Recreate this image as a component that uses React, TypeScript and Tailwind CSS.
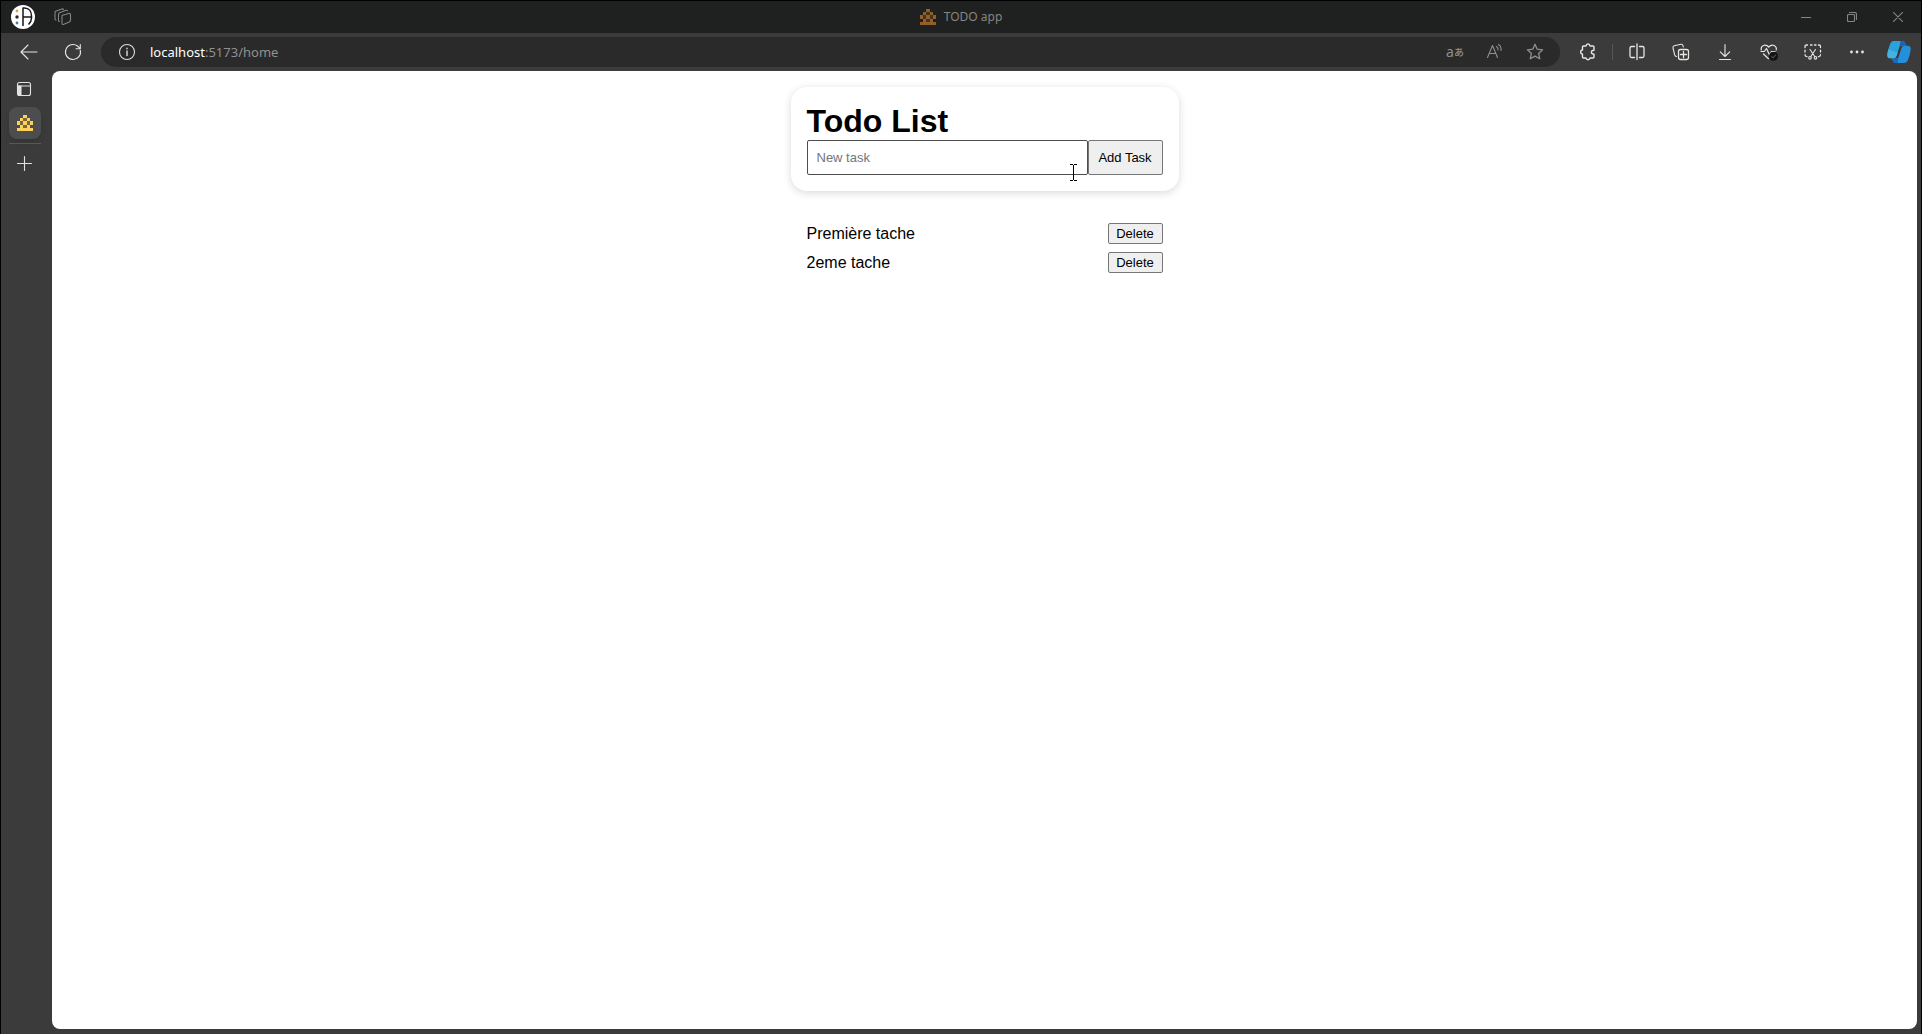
import type { ReactNode } from 'react';

function House({ main, dim }: { main: string; dim: string }) {
  return (
    <svg width="16" height="16" viewBox="0 0 5 5" shapeRendering="crispEdges" aria-hidden="true">
      <path fill={dim} d="M2 1h1v1h-1zM1 2h1v1h-1zM3 2h1v1h-1zM2 3h1v1h-1z" />
      <path
        fill={main}
        d="M2 0h1v1h-1zM1 1h1v1h-1zM3 1h1v1h-1zM0 2h1v1h-1zM2 2h1v1h-1zM4 2h1v1h-1zM1 3h1v1h-1zM3 3h1v1h-1zM0 4h5v1h-5z"
      />
    </svg>
  );
}

function Glyph({ size = 20, children }: { size?: number; children: ReactNode }) {
  return (
    <svg
      width={size}
      height={size}
      viewBox={`0 0 ${size} ${size}`}
      fill="none"
      stroke="currentColor"
      strokeWidth="1.1"
      strokeLinecap="round"
      strokeLinejoin="round"
      aria-hidden="true"
    >
      {children}
    </svg>
  );
}

function IconButton({ label, className, children }: { label: string; className: string; children: ReactNode }) {
  return (
    <button type="button" aria-label={label} className={`flex shrink-0 items-center justify-center ${className}`}>
      {children}
    </button>
  );
}

function TitleBar() {
  return (
    <header className="grid h-8 shrink-0 grid-cols-[1fr_auto_1fr] items-center bg-[#1f2120] text-[#858583]">
      <div className="flex items-center pl-[10px]">
        <IconButton label="Profile" className="size-6">
          <svg width="24" height="24" viewBox="0 0 24 24" aria-hidden="true">
            <circle cx="12" cy="12" r="12" fill="#fff" />
            <circle cx="6" cy="6" r="1.4" fill="#dda24b" />
            <circle cx="6" cy="12" r="1.7" fill="#222c30" />
            <circle cx="6" cy="18" r="1.4" fill="#3f7eae" />
            <path
              d="M12 21V2.6M12 3h1.500c4.500 0 7 3.500 7 8v2c0 3-1.500 5-3 6.500M12 12h8.500"
              fill="none"
              stroke="#161616"
              strokeWidth="1.5"
            />
          </svg>
        </IconButton>
        <IconButton label="Workspaces" className="ml-4 size-6">
          <Glyph size={18}>
            <path d="M8.500 7.300 14.800 5.500Q16.500 5 16.500 6.800V12q0 1.300-1.200 1.900L9.800 16.300Q8 17 8 15.200V8.200q0-.7.500-.9z" />
            <path d="M5.500 13.500Q4.500 13.500 4.500 12.200V6.500q0-1.200 1.200-1.700L12 2.300q1-.3 1.500.5M2 12Q1 12 1 10.700V4.800q0-1.200 1.200-1.700L8 1q1-.3 1.500.5" />
          </Glyph>
        </IconButton>
      </div>
      <div className="flex items-center gap-2">
        <House main="#935f28" dim="#443321" />
        <span className="text-[12px] leading-4">TODO app</span>
      </div>
      <div className="flex justify-end">
        <IconButton label="Minimize" className="h-8 w-[46px]">
          <Glyph size={10}><path d="M0 5.500h10" /></Glyph>
        </IconButton>
        <IconButton label="Restore" className="h-8 w-[46px]">
          <Glyph size={10}>
            <rect x=".5" y="2.500" width="7" height="7" rx="1" />
            <path d="M2.500.5h5q2 0 2 2v5" />
          </Glyph>
        </IconButton>
        <IconButton label="Close" className="h-8 w-[46px]">
          <Glyph size={10}><path d="m.4.4 9.200 9.200M9.600.4.4 9.600" /></Glyph>
        </IconButton>
      </div>
    </header>
  );
}

function AddressBar() {
  return (
    <div className="flex h-[30px] min-w-0 flex-1 items-center rounded-full bg-[#2a2a2a] pl-4 pr-[15px]">
      <IconButton label="Site information" className="size-5 text-[#dedede]">
        <Glyph>
          <circle cx="10" cy="10" r="7.500" />
          <path d="M10 9v4.500M10 6.300v.4" strokeWidth="1.4" />
        </Glyph>
      </IconButton>
      <a href="#home" className="ml-[13px] min-w-0 flex-1 truncate text-[13px] leading-5 text-[#8f9092]">
        <span className="text-white">localhost</span>:5173/home
      </a>
      <div className="flex items-center gap-5 text-[#8d8f90]">
        <IconButton label="Translate" className="size-5">
          <span className="flex items-center whitespace-nowrap leading-5">
            <span className="text-[14px]">a</span>
            <span className="text-[10px] font-medium">あ</span>
          </span>
        </IconButton>
        <IconButton label="Read aloud" className="size-5">
          <Glyph>
            <path d="M2.500 15.500 7.500 3.500l5 12M4.200 11.500h6.600" />
            <path d="M11.500 4.500q1.800 1.200 1.500 3.500M13.500 2.500q3 2 2.500 6" />
          </Glyph>
        </IconButton>
        <IconButton label="Add to favorites" className="size-5">
          <Glyph>
            <path
              d="m10 2.300 2.200 4.900 5.400.6-4 3.600 1.200 5.400L10 14.100l-4.800 2.700 1.200-5.400-4-3.600 5.400-.6z"
              strokeWidth="1.3"
            />
          </Glyph>
        </IconButton>
      </div>
    </div>
  );
}

function Toolbar() {
  return (
    <nav className="flex h-[38px] shrink-0 items-center pl-[18px] pr-[10px] text-[#e8e6e3]">
      <IconButton label="Back" className="size-5">
        <Glyph><path d="M18 10H2.300M9 3 2 10l7 7" /></Glyph>
      </IconButton>
      <IconButton label="Refresh" className="ml-6 mr-[18px] size-5">
        <Glyph>
          <path d="M17.300 8.300A7.500 7.500 0 1 1 14.500 4l2.200 2.200M17.300 2.500v4.300H13" />
        </Glyph>
      </IconButton>
      <AddressBar />
      <IconButton label="Extensions" className="ml-[18px] size-5">
        <Glyph>
          <path
            d="M5.500 4H8q.2-2 2-2t2 2h3q1 0 1 1v3.300q-2.600 0-2.600 1.900t2.600 1.900V15q0 1-1 1h-3q-.2 1.700-2 1.700T8 16H5.500q-1 0-1-1v-2.900Q2.700 12 2.700 10t1.800-2V5q0-1 1-1z"
            strokeWidth="1.4"
          />
        </Glyph>
      </IconButton>
      <span className="ml-[14px] h-4 w-px bg-[#5b554f]" />
      <div className="ml-[14px] flex items-center gap-6">
        <IconButton label="Split screen" className="size-5">
          <Glyph>
            <path
              d="M10 2v15.500M7.500 4.500h-3q-1.500 0-1.500 1.500v8q0 1.500 1.500 1.500h3M12.500 4.500h3q1.500 0 1.500 1.500v8q0 1.500-1.500 1.500h-3"
              strokeWidth="1.3"
            />
          </Glyph>
        </IconButton>
        <IconButton label="Collections" className="size-5">
          <Glyph>
            <path d="M5.500 14.500q-1.500 0-1.900-1.800L2 6q-.3-1.700 1.200-2.200L10 2.300q1.600-.3 2 1.300L12.300 5" />
            <rect x="7.500" y="7.500" width="10" height="10" rx="2" strokeWidth="1.3" />
            <path d="M12.500 9.500v6M9.500 12.500h6" strokeWidth="1.3" />
          </Glyph>
        </IconButton>
        <IconButton label="Downloads" className="size-5">
          <Glyph><path d="M10 2.500v12M5.300 9.800 10 14.500l4.700-4.700M4.500 17.500h11" /></Glyph>
        </IconButton>
        <IconButton label="Browser essentials" className="size-5">
          <Glyph>
            <path
              d="M2.300 8Q1.500 4.800 4.500 3.500 7.500 2.500 9.700 5 12 2.500 15 3.500q3 1.500 2.200 4.500M4.500 12l5 4.700M2 9.500h3.300L7.500 6.500l3 6.500 2-3.500H16"
              strokeWidth="1.2"
            />
            <circle cx="14.500" cy="14.200" r="4.500" fill="#111313" stroke="none" />
            <path d="m12.500 14.300 1.500 1.500 2.700-2.800" stroke="#4a4d4d" />
          </Glyph>
        </IconButton>
        <IconButton label="Screenshot" className="size-5">
          <Glyph>
            <path
              d="M2 5.500V4.500Q2 3 3.500 3h1M7.500 3h1.500M11.500 3h1.500M15.500 3H16q1.500 0 1.500 1.500v1M17.500 8.200v1.800M17.500 12.700q0 1.800-2 2M2 8.200v1.800M2 12.700q0 1.800 2 2"
              strokeWidth="1.3"
            />
            <path d="m7 7.500 4.700 7M12.500 7.500l-4.700 7" strokeWidth="1.1" />
            <circle cx="7" cy="15.800" r="1.300" />
            <circle cx="12.500" cy="15.800" r="1.300" />
          </Glyph>
        </IconButton>
        <IconButton label="Settings and more" className="size-5">
          <svg width="20" height="20" viewBox="0 0 20 20" fill="currentColor" aria-hidden="true">
            <circle cx="4.500" cy="10" r="1.400" />
            <circle cx="10" cy="10" r="1.400" />
            <circle cx="15.500" cy="10" r="1.400" />
          </svg>
        </IconButton>
      </div>
      <IconButton label="Copilot" className="ml-5 size-6">
        <svg width="24" height="24" viewBox="0 0 24 24" aria-hidden="true">
          <path d="M7 1h8.500q2 0 2.600 2l.8 2.500h-4q-2 0-2.700 2L9.500 16q-.8 2.200-3 2.200H3Q0 18 .3 14.500 1 9 3 4.200 4.300 1 7 1z" fill="#2ba2dc" />
          <path d="M17 23H8.500q-2 0-2.600-2l-.8-2.500h4q2 0 2.700-2L14.500 8q.8-2.200 3-2.200H21q3 .2 2.700 3.700-.7 5.500-2.700 10.300Q19.700 23 17 23z" fill="#2490dc" />
          <path d="M13.500 1h2q2 0 2.600 2l.8 2.500h-4q-1.700 0-2.500 1.500z" fill="#1b62b5" />
          <path d="M10.500 23h-2q-2 0-2.600-2l-.8-2.500h4q1.700 0 2.500-1.500z" fill="#1d69b9" />
          <path d="M.3 14.500Q.6 12 1.300 9.500l9.500 3L9.500 16q-.8 2.200-3 2.200H3Q0 18 .3 14.500z" fill="#45b2df" />
        </svg>
      </IconButton>
    </nav>
  );
}

function Sidebar() {
  return (
    <aside className="flex w-[51px] shrink-0 flex-col items-start pl-2 text-[#e2e2e2]">
      <IconButton label="Tab actions" className="mt-[10px] h-4 w-[30px]">
        <Glyph size={16}>
          <rect x="1.500" y="1.500" width="13" height="13" rx="2" />
          <path d="M2 5h12" />
          <path d="M2 5h3v9H3.500Q2 14 2 13z" fill="currentColor" />
        </Glyph>
      </IconButton>
      <IconButton label="TODO app" className="mt-[10px] size-8 rounded-lg bg-[#4b4d4e] shadow-md">
        <House main="#fdd15c" dim="#7a6541" />
      </IconButton>
      <span className="mt-1 h-px w-8 bg-[#595751]" />
      <IconButton label="New tab" className="mt-[11px] h-4 w-[30px]">
        <Glyph size={16}><path d="M8.500 1.500v14M1.500 8.500h14" /></Glyph>
      </IconButton>
    </aside>
  );
}

const tasks = ['Première tache', '2eme tache'];

function TodoPage() {
  return (
    <main className="mb-[5px] mr-1 flex flex-1 flex-col items-center rounded-lg bg-white pt-4 font-['Liberation_Sans',Arial,sans-serif] text-black">
      <div className="w-[388px] max-w-full">
        <section className="relative rounded-2xl p-4 shadow-[0_2px_8px_rgba(0,0,0,0.15)]">
          <h1 className="text-[32px] font-bold leading-[37px]">Todo List</h1>
          <form className="flex h-[35px]" onSubmit={(e) => e.preventDefault()}>
            <input
              type="text"
              aria-label="New task"
              placeholder="New task"
              className="min-w-0 flex-1 rounded-[2px] border border-[#4d4d4d] px-[9px] text-[13px] placeholder:text-[#757575]"
            />
            <button
              type="submit"
              className="w-[75px] rounded-[2px] border border-[#767676] bg-[#efefef] text-[13px]"
            >
              Add Task
            </button>
          </form>
          <svg
            className="pointer-events-none absolute bottom-[10px] right-[101px]"
            width="8"
            height="17"
            viewBox="0 0 8 17"
            fill="none"
            stroke="#000"
            shapeRendering="crispEdges"
            aria-hidden="true"
          >
            <path d="M0 .5h3M4 .5h3M3.500 1v15M0 16.500h3M4 16.500h3" />
          </svg>
        </section>
        <ul className="mt-8 flex flex-col gap-2 px-4">
          {tasks.map((task) => (
            <li key={task} className="flex h-[21px] items-center justify-between text-base">
              <span>{task}</span>
              <button
                type="button"
                aria-label={`Delete ${task}`}
                className="h-[21px] w-[55px] rounded-[2px] border border-[#767676] bg-[#efefef] text-[13px] leading-4"
              >
                Delete
              </button>
            </li>
          ))}
        </ul>
      </div>
    </main>
  );
}

export default function App() {
  return (
    <div className="flex min-h-screen flex-col border-x border-t border-black bg-[#3b3b3b] font-['Noto_Sans','Noto_Sans_CJK_JP',sans-serif]">
      <TitleBar />
      <Toolbar />
      <div className="flex flex-1">
        <Sidebar />
        <TodoPage />
      </div>
    </div>
  );
}
